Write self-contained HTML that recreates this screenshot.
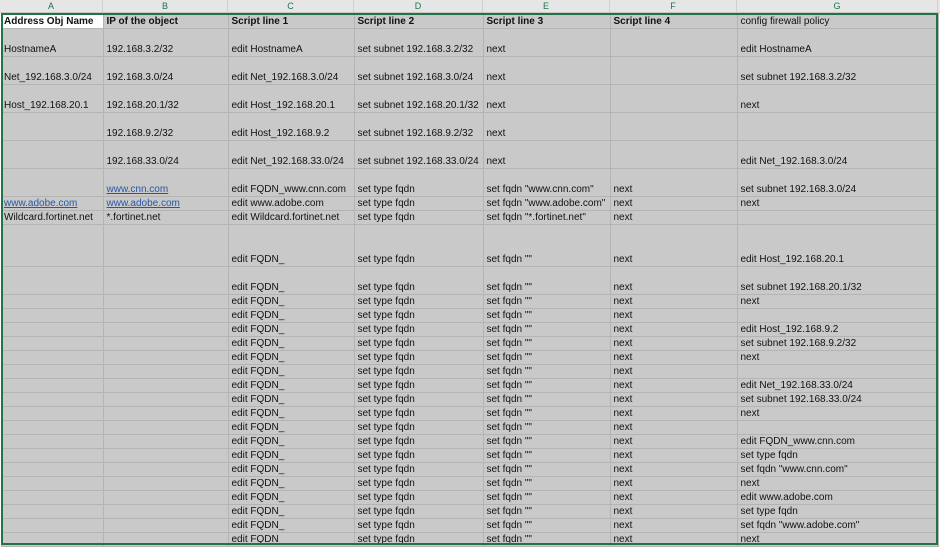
<!DOCTYPE html>
<html><head><style>
body{margin:0;width:942px;height:547px;overflow:hidden;background:#fff;position:relative;font-family:"Liberation Sans",Arial,sans-serif;}
.hdr{position:absolute;top:0;left:0;width:940px;height:13px;background:#e6e6e6;border-bottom:1px solid #c8c8c8;box-sizing:border-box}
.hdr span{position:absolute;top:0;height:12px;font-size:9px;line-height:12px;color:#217346;text-align:center;border-right:1px solid #d0d0d0;box-sizing:border-box}
table{position:absolute;top:13px;left:1px;border-collapse:collapse;table-layout:fixed;background:#c9c9c9}
td{border-right:1px solid #b4b4b4;border-bottom:1px solid #b4b4b4;padding:0 0 0 3px;font-size:10px;color:#111;vertical-align:bottom;white-space:nowrap;overflow:hidden;line-height:12px}
tr.h28 td{height:27px}tr.h14 td{height:13px}tr.h42 td{height:41px}tr.h16 td{height:15px}
.b{font-weight:bold}
a{color:#2a55a8;text-decoration:underline}
.sel{position:absolute;top:13px;left:1px;width:937px;height:532px;border:2px solid #217346;box-sizing:border-box;pointer-events:none}
</style></head><body>
<div class="hdr">
<span style="left:0;width:103px">A</span><span style="left:103px;width:125px">B</span><span style="left:228px;width:126px">C</span><span style="left:354px;width:129px">D</span><span style="left:483px;width:127px">E</span><span style="left:610px;width:127px">F</span><span style="left:737px;width:201px">G</span>
</div>
<table>
<colgroup><col style="width:102px"><col style="width:125px"><col style="width:126px"><col style="width:129px"><col style="width:127px"><col style="width:127px"><col style="width:201px"></colgroup>
<tr class="h16"><td class="b" style="background:#fff">Address Obj Name</td><td class="b">IP of the object</td><td class="b">Script line 1</td><td class="b">Script line 2</td><td class="b">Script line 3</td><td class="b">Script line 4</td><td>config firewall policy</td></tr>
<tr class="h28"><td>HostnameA</td><td>192.168.3.2/32</td><td>edit HostnameA</td><td>set subnet 192.168.3.2/32</td><td>next</td><td></td><td>edit HostnameA</td></tr>
<tr class="h28"><td>Net_192.168.3.0/24</td><td>192.168.3.0/24</td><td>edit Net_192.168.3.0/24</td><td>set subnet 192.168.3.0/24</td><td>next</td><td></td><td>set subnet 192.168.3.2/32</td></tr>
<tr class="h28"><td>Host_192.168.20.1</td><td>192.168.20.1/32</td><td>edit Host_192.168.20.1</td><td>set subnet 192.168.20.1/32</td><td>next</td><td></td><td>next</td></tr>
<tr class="h28"><td></td><td>192.168.9.2/32</td><td>edit Host_192.168.9.2</td><td>set subnet 192.168.9.2/32</td><td>next</td><td></td><td></td></tr>
<tr class="h28"><td></td><td>192.168.33.0/24</td><td>edit Net_192.168.33.0/24</td><td>set subnet 192.168.33.0/24</td><td>next</td><td></td><td>edit Net_192.168.3.0/24</td></tr>
<tr class="h28"><td></td><td><a>www.cnn.com</a></td><td>edit FQDN_www.cnn.com</td><td>set type fqdn</td><td>set fqdn "www.cnn.com"</td><td>next</td><td>set subnet 192.168.3.0/24</td></tr>
<tr class="h14"><td><a>www.adobe.com</a></td><td><a>www.adobe.com</a></td><td>edit www.adobe.com</td><td>set type fqdn</td><td>set fqdn "www.adobe.com"</td><td>next</td><td>next</td></tr>
<tr class="h14"><td>Wildcard.fortinet.net</td><td>*.fortinet.net</td><td>edit Wildcard.fortinet.net</td><td>set type fqdn</td><td>set fqdn "*.fortinet.net"</td><td>next</td><td></td></tr>
<tr class="h42"><td></td><td></td><td>edit FQDN_</td><td>set type fqdn</td><td>set fqdn ""</td><td>next</td><td>edit Host_192.168.20.1</td></tr>
<tr class="h28"><td></td><td></td><td>edit FQDN_</td><td>set type fqdn</td><td>set fqdn ""</td><td>next</td><td>set subnet 192.168.20.1/32</td></tr>
<tr class="h14"><td></td><td></td><td>edit FQDN_</td><td>set type fqdn</td><td>set fqdn ""</td><td>next</td><td>next</td></tr>
<tr class="h14"><td></td><td></td><td>edit FQDN_</td><td>set type fqdn</td><td>set fqdn ""</td><td>next</td><td></td></tr>
<tr class="h14"><td></td><td></td><td>edit FQDN_</td><td>set type fqdn</td><td>set fqdn ""</td><td>next</td><td>edit Host_192.168.9.2</td></tr>
<tr class="h14"><td></td><td></td><td>edit FQDN_</td><td>set type fqdn</td><td>set fqdn ""</td><td>next</td><td>set subnet 192.168.9.2/32</td></tr>
<tr class="h14"><td></td><td></td><td>edit FQDN_</td><td>set type fqdn</td><td>set fqdn ""</td><td>next</td><td>next</td></tr>
<tr class="h14"><td></td><td></td><td>edit FQDN_</td><td>set type fqdn</td><td>set fqdn ""</td><td>next</td><td></td></tr>
<tr class="h14"><td></td><td></td><td>edit FQDN_</td><td>set type fqdn</td><td>set fqdn ""</td><td>next</td><td>edit Net_192.168.33.0/24</td></tr>
<tr class="h14"><td></td><td></td><td>edit FQDN_</td><td>set type fqdn</td><td>set fqdn ""</td><td>next</td><td>set subnet 192.168.33.0/24</td></tr>
<tr class="h14"><td></td><td></td><td>edit FQDN_</td><td>set type fqdn</td><td>set fqdn ""</td><td>next</td><td>next</td></tr>
<tr class="h14"><td></td><td></td><td>edit FQDN_</td><td>set type fqdn</td><td>set fqdn ""</td><td>next</td><td></td></tr>
<tr class="h14"><td></td><td></td><td>edit FQDN_</td><td>set type fqdn</td><td>set fqdn ""</td><td>next</td><td>edit FQDN_www.cnn.com</td></tr>
<tr class="h14"><td></td><td></td><td>edit FQDN_</td><td>set type fqdn</td><td>set fqdn ""</td><td>next</td><td>set type fqdn</td></tr>
<tr class="h14"><td></td><td></td><td>edit FQDN_</td><td>set type fqdn</td><td>set fqdn ""</td><td>next</td><td>set fqdn "www.cnn.com"</td></tr>
<tr class="h14"><td></td><td></td><td>edit FQDN_</td><td>set type fqdn</td><td>set fqdn ""</td><td>next</td><td>next</td></tr>
<tr class="h14"><td></td><td></td><td>edit FQDN_</td><td>set type fqdn</td><td>set fqdn ""</td><td>next</td><td>edit www.adobe.com</td></tr>
<tr class="h14"><td></td><td></td><td>edit FQDN_</td><td>set type fqdn</td><td>set fqdn ""</td><td>next</td><td>set type fqdn</td></tr>
<tr class="h14"><td></td><td></td><td>edit FQDN_</td><td>set type fqdn</td><td>set fqdn ""</td><td>next</td><td>set fqdn "www.adobe.com"</td></tr>
<tr class="h14"><td></td><td></td><td>edit FQDN_</td><td>set type fqdn</td><td>set fqdn ""</td><td>next</td><td>next</td></tr>
</table>
<div class="sel"></div>
</body></html>
